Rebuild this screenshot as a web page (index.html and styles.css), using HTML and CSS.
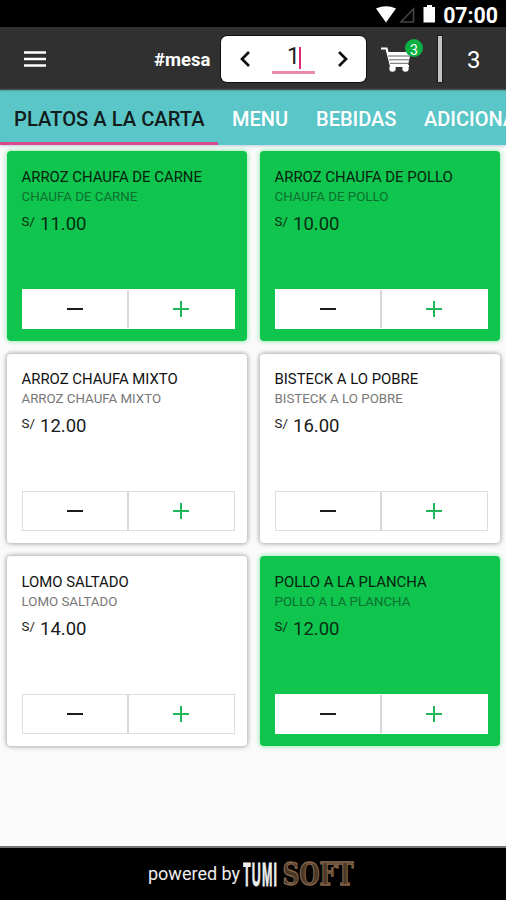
FILE: index.html
```html
<!DOCTYPE html>
<html lang="es">
<head>
<meta charset="utf-8">
<title>Platos a la carta</title>
<link rel="stylesheet" href="styles.css">
</head>
<body>
<div class="status">
  <svg class="status-icons" width="67" height="20" viewBox="0 0 67 20">
    <path d="M0 3.5Q10-1 20 3.5L10 17.5Z" fill="#fff"/>
    <path d="M37.5 4v13H25Z" fill="none" stroke="#444" stroke-width="1.6"/>
    <path d="M51 0h5v2h3v15.5H47.500V2H51Z" fill="#fff"/>
  </svg>
  <span class="clock">07:00</span>
</div>
<header class="bar">
  <svg class="burger" width="24" height="18" viewBox="0 0 24 18"><path d="M1 2.5h22M1 9h22M1 15.5h22" stroke="#fff" stroke-width="2.7"/></svg>
  <span class="mesa">#mesa</span>
  <div class="stepper">
    <svg width="12" height="18" viewBox="0 0 12 18"><path d="M11 2L4 9l7 7" fill="none" stroke="#111" stroke-width="2.7"/></svg>
    <div class="field"><span>1</span><i class="caret"></i></div>
    <svg width="12" height="18" viewBox="0 0 12 18"><path d="M2 2l7 7-7 7" fill="none" stroke="#111" stroke-width="2.7"/></svg>
  </div>
  <div class="cart">
    <svg width="36" height="28" viewBox="0 0 36 28">
      <path d="M0 1.500h5.500l4.500 17.500H28" fill="none" stroke="#fff" stroke-width="2.2"/>
      <path d="M6 5h24l-3 13H9Z" fill="#fff"/>
      <path d="M7 9h23M8 12.800h21M9 16.300h19" stroke="#666" stroke-width="1"/>
      <circle cx="11.500" cy="21.500" r="3.200" fill="#fff"/><circle cx="24.500" cy="21.500" r="3.200" fill="#fff"/>
    </svg>
    <span class="badge">3</span>
  </div>
  <span class="rule"></span>
  <span class="count">3</span>
</header>
<nav class="tabs">
  <span class="tab active">PLATOS A LA CARTA</span>
  <span class="tab menu">MENU</span>
  <span class="tab bebidas">BEBIDAS</span>
  <span class="tab adicional">ADICIONAL</span>
</nav>
<main class="grid">
  <article class="card on"><h2>ARROZ CHAUFA DE CARNE</h2><p>CHAUFA DE CARNE</p><div class="price"><small>S/</small>11.00</div>
    <div class="buttons"><span class="minus"><svg width="16" height="16"><path d="M0 8h16"/></svg></span><span class="plus"><svg width="16" height="16"><path d="M0 8h16M8 0v16"/></svg></span></div></article>
  <article class="card on"><h2>ARROZ CHAUFA DE POLLO</h2><p>CHAUFA DE POLLO</p><div class="price"><small>S/</small>10.00</div>
    <div class="buttons"><span class="minus"><svg width="16" height="16"><path d="M0 8h16"/></svg></span><span class="plus"><svg width="16" height="16"><path d="M0 8h16M8 0v16"/></svg></span></div></article>
  <article class="card"><h2>ARROZ CHAUFA MIXTO</h2><p>ARROZ CHAUFA MIXTO</p><div class="price"><small>S/</small>12.00</div>
    <div class="buttons"><span class="minus"><svg width="16" height="16"><path d="M0 8h16"/></svg></span><span class="plus"><svg width="16" height="16"><path d="M0 8h16M8 0v16"/></svg></span></div></article>
  <article class="card"><h2>BISTECK A LO POBRE</h2><p>BISTECK A LO POBRE</p><div class="price"><small>S/</small>16.00</div>
    <div class="buttons"><span class="minus"><svg width="16" height="16"><path d="M0 8h16"/></svg></span><span class="plus"><svg width="16" height="16"><path d="M0 8h16M8 0v16"/></svg></span></div></article>
  <article class="card"><h2>LOMO SALTADO</h2><p>LOMO SALTADO</p><div class="price"><small>S/</small>14.00</div>
    <div class="buttons"><span class="minus"><svg width="16" height="16"><path d="M0 8h16"/></svg></span><span class="plus"><svg width="16" height="16"><path d="M0 8h16M8 0v16"/></svg></span></div></article>
  <article class="card on"><h2>POLLO A LA PLANCHA</h2><p>POLLO A LA PLANCHA</p><div class="price"><small>S/</small>12.00</div>
    <div class="buttons"><span class="minus"><svg width="16" height="16"><path d="M0 8h16"/></svg></span><span class="plus"><svg width="16" height="16"><path d="M0 8h16M8 0v16"/></svg></span></div></article>
</main>
<footer class="footer">
  <span class="powered">powered by</span>
  <svg class="logo" width="116" height="46" viewBox="0 0 116 46">
    <text class="tumi" x="0" y="35" textLength="35" lengthAdjust="spacingAndGlyphs">TUMI</text>
    <text class="soft" x="39.5" y="34" textLength="71" lengthAdjust="spacingAndGlyphs">SOFT</text>
  </svg>
</footer>
</body>
</html>
```
FILE: styles.css
```css
* { box-sizing: border-box; }
body {
  margin: 0;
  width: 506px;
  height: 900px;
  overflow: hidden;
  display: flex;
  flex-direction: column;
  background: #fafafa;
  font-family: Roboto, "Liberation Sans", sans-serif;
}
.status {
  height: 27px;
  flex: none;
  background: #000;
  color: #fff;
  display: flex;
  justify-content: flex-end;
  padding: 4px 8px 0 0;
}
.status-icons { margin: 1px 0 0; }
.clock { font-size: 21.3px; line-height: 23px; font-weight: 700; }
.bar {
  height: 63px;
  flex: none;
  background: #303030;
  color: #fff;
  display: flex;
  align-items: center;
}
.burger { margin-left: 23px; }
.mesa { width: 57px; margin: 2px 0 0 107px; font-size: 18.5px; font-weight: 700; }
.stepper {
  width: 145px;
  height: 46px;
  margin-left: 10px;
  padding: 0 17px;
  border-radius: 6px;
  background: #fff;
  box-shadow: 0 0 0 1px #111;
  display: flex;
  align-items: center;
  justify-content: space-between;
}
.field {
  width: 43px;
  height: 28px;
  margin-top: 3px;
  border-bottom: 3px solid #e889ad;
  color: #222;
  font-size: 23px;
  line-height: 22px;
  padding-left: 15px;
  display: flex;
}
.field span { width: 12px; }
.caret { width: 2px; height: 22px; margin-top: 1px; background: #e0287c; }
.cart { position: relative; width: 42px; height: 28px; margin: 4px 0 0 15px; }
.cart svg { display: block; }
.badge {
  position: absolute;
  left: 24px;
  top: -8px;
  width: 18px;
  height: 18px;
  border-radius: 50%;
  background: #0cb043;
  font-size: 14px;
  line-height: 22px;
  text-align: center;
}
.rule { width: 4px; height: 46px; margin-left: 15px; background: #c4c4c4; box-shadow: 0 0 0 1px #1d1d1d; }
.count { margin: 3px 0 0 25px; font-size: 24px; }
.tabs {
  height: 55px;
  flex: none;
  background: #5bc6c7;
  box-shadow: inset 0 2px 2px -1px #4aa4a5, 0 1px 3px #bcd;
  color: #fff;
  display: flex;
  font-size: 20px;
  line-height: 58px;
  font-weight: 500;
  white-space: nowrap;
  overflow: hidden;
}
.tab { flex: none; }
.tab.active { width: 218px; padding-left: 14px; font-size: 20.2px; color: #121c1c; border-bottom: 3px solid #d54a8a; }
.tab.menu { width: 84px; padding-left: 14px; }
.tab.bebidas { width: 108px; padding-left: 14px; }
.tab.adicional { padding-left: 14px; }
.grid {
  flex: 1;
  display: grid;
  grid-template-columns: 240px 240px;
  grid-auto-rows: 189.5px;
  gap: 13px;
  align-content: start;
  padding: 6px 7px 0 7px;
}
.card {
  display: flex;
  flex-direction: column;
  padding: 14.5px 12.5px 12px 14.5px;
  border-radius: 4px;
  background: #fff;
  box-shadow: 0 0 4px 1px #a9a9a9;
}
.card.on { background: #0fc54e; box-shadow: 0 0 4px 1px #9feab7; }
.card h2 { margin: 0; font-size: 14.9px; line-height: 22px; font-weight: 400; color: #111; white-space: nowrap; }
.card p { margin: 0; font-size: 13.3px; line-height: 18px; color: #777; white-space: nowrap; }
.card.on h2 { color: #06220f; }
.card.on p { color: #0b7030; }
.price { margin-top: 6px; font-size: 18.5px; line-height: 25px; color: #1a1a1a; display: flex; }
.card.on .price { color: #062d13; }
.price small { width: 18.5px; font-size: 13.3px; line-height: 19px; }
.buttons { height: 40px; margin-top: auto; display: flex; border: 1px solid #dedede; background: #fff; }
.card.on .buttons { border-color: #fff; }
.buttons span { flex: 1; display: flex; align-items: center; justify-content: center; }
.minus { border-right: 2px solid #d8d8d8; }
.buttons path { fill: none; stroke: #1c1c1c; stroke-width: 2; }
.buttons .plus path { stroke: #1db85a; }
.footer {
  height: 54px;
  flex: none;
  background: #000;
  border-top: 2px solid #777;
  color: #eee;
  display: flex;
  align-items: center;
}
.powered { width: 95px; margin: -2px 0 0 148px; font-size: 18px; white-space: nowrap; }
.tumi { font: 700 33px "Liberation Sans", sans-serif; letter-spacing: 3px; fill: #eee; stroke: #eee; stroke-width: .8; }
.soft { font: 700 31px "DejaVu Serif", serif; fill: #4a3828; stroke: #87664a; stroke-width: 1.3; }
```
